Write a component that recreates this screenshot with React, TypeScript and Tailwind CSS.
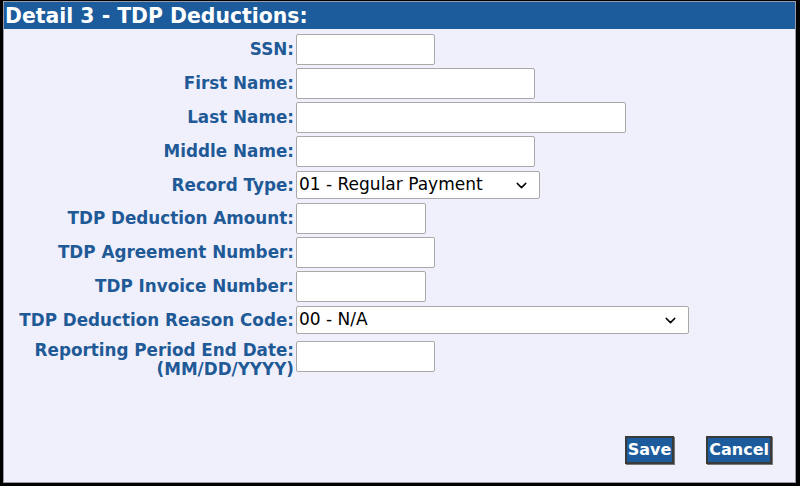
import { ChevronDown } from 'lucide-react';

const font = { fontFamily: '"DejaVu Sans", Verdana, sans-serif' };

type Row = { label: string; kind: 'input' | 'select'; width: number; value?: string; twoLine?: string };

const rows: Row[] = [
  { label: 'SSN:', kind: 'input', width: 139 },
  { label: 'First Name:', kind: 'input', width: 239 },
  { label: 'Last Name:', kind: 'input', width: 330 },
  { label: 'Middle Name:', kind: 'input', width: 239 },
  { label: 'Record Type:', kind: 'select', width: 244, value: '01 - Regular Payment' },
  { label: 'TDP Deduction Amount:', kind: 'input', width: 130 },
  { label: 'TDP Agreement Number:', kind: 'input', width: 139 },
  { label: 'TDP Invoice Number:', kind: 'input', width: 130 },
  { label: 'TDP Deduction Reason Code:', kind: 'select', width: 393, value: '00 - N/A' },
  { label: 'Reporting Period End Date:', kind: 'input', width: 139, twoLine: '(MM/DD/YYYY)' },
];

function Field({ row }: { row: Row }) {
  if (row.kind === 'select') {
    return (
      <div
        className="flex h-[28px] items-center justify-between rounded-[2px] border border-[#a9a9a9] bg-white pl-[2px] pr-[9px] text-[17px] text-black"
        style={{ width: row.width }}
      >
        <span>{row.value}</span>
        <ChevronDown size={17} strokeWidth={2} />
      </div>
    );
  }
  return <div className="h-[31px] rounded-[2px] border border-[#a9a9a9] bg-white" style={{ width: row.width }} />;
}

export default function App() {
  return (
    <div className="h-[486px] w-[800px] bg-black pb-[3px] pl-[3px] pr-[4px] pt-[1px]" style={font}>
      <div className="flex h-full flex-col border border-[#9a9aa6] bg-[#f0f0fd]">
        <div className="flex h-[27px] items-center bg-[#1c5c9c] pl-[1px] pt-[1px] text-[20.4px] font-bold leading-none text-white">
          Detail 3 - TDP Deductions:
        </div>
        <div className="flex flex-col gap-[3px] pt-[5px]">
          {rows.map((row) => (
            <div
              key={row.label}
              className={`flex ${row.twoLine ? 'mt-[3px] items-start' : 'items-center'} ${row.kind === 'select' ? 'h-[30px]' : ''}`}
            >
              <div className="w-[292px] whitespace-nowrap pr-[2px] text-right text-[16.8px] font-bold leading-[19px] text-[#1f5a96]">
                {row.label}
                {row.twoLine && <div>{row.twoLine}</div>}
              </div>
              <Field row={row} />
            </div>
          ))}
        </div>
        <div className="mt-auto flex justify-end gap-[32px] pb-[18px] pr-[23px]">
          <button className="h-[28px] border-2 border-[#3a3a3a] bg-[#1c5c9c] px-[1px] text-[16px] font-bold leading-none text-white shadow-[1px_1px_0_#777]">
            Save
          </button>
          <button className="h-[28px] border-2 border-[#3a3a3a] bg-[#1c5c9c] px-[1px] text-[16px] font-bold leading-none text-white shadow-[1px_1px_0_#777]">
            Cancel
          </button>
        </div>
      </div>
    </div>
  );
}
